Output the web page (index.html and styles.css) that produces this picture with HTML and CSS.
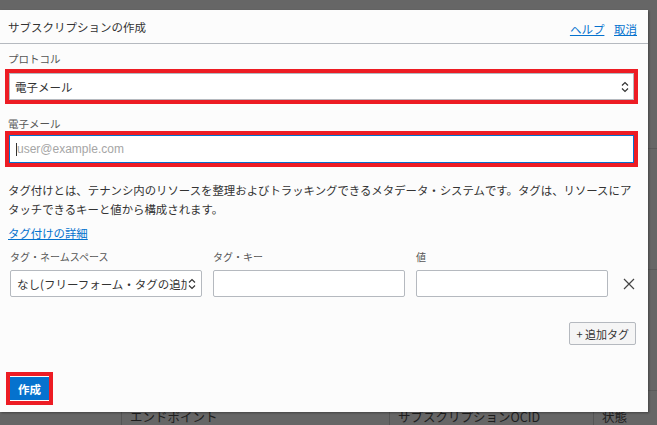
FILE: index.html
```html
<!DOCTYPE html>
<html lang="ja">

<head>
    <meta charset="UTF-8">
    <meta name="viewport" content="width=device-width, initial-scale=1.0">
    <title>サブスクリプションの作成</title>
    <link rel="stylesheet" href="styles.css">
</head>

<body>

    <!-- Page behind the dialog -->
    <div class="backdrop">
        <div class="bg-rows">
            <div class="bg-row"></div>
            <div class="bg-row"></div>
            <div class="bg-row"></div>
        </div>
        <div class="bg-head">
            <div class="bg-cell c0"></div>
            <div class="bg-cell c1">エンドポイント</div>
            <div class="bg-cell c2">サブスクリプションOCID</div>
            <div class="bg-cell c3">状態</div>
        </div>
    </div>

    <!-- Create Subscription dialog -->
    <div class="dialog">
        <div class="dialog-header">
            <h3>サブスクリプションの作成</h3>
            <div class="header-links">
                <a href="#">ヘルプ</a>
                <a href="#">取消</a>
            </div>
        </div>

        <div class="dialog-body">
            <div class="field">
                <label class="label">プロトコル</label>
                <div class="mark">
                    <div class="select big">
                        <span>電子メール</span>
                        <svg class="updown" width="8" height="12" viewBox="0 0 8 12">
                            <path d="M1 4.5 L4 1.5 L7 4.5 M1 7.5 L4 10.5 L7 7.5" fill="none" stroke="#333" stroke-width="1.2"/>
                        </svg>
                    </div>
                </div>
            </div>

            <div class="field second">
                <label class="label">電子メール</label>
                <div class="mark">
                    <div class="input focused">
                        <span class="caret"></span><span class="placeholder">user@example.com</span>
                    </div>
                </div>
            </div>

            <p class="tag-info">タグ付けとは、テナンシ内のリソースを整理およびトラッキングできるメタデータ・システムです。タグは、リソースにアタッチできるキーと値から構成されます。</p>
            <a href="#" class="more-link">タグ付けの詳細</a>

            <div class="tag-grid">
                <div class="label small">タグ・ネームスペース</div>
                <div class="label small">タグ・キー</div>
                <div class="label small">値</div>
                <div></div>

                <div class="select tag">
                    <span class="clip">なし(フリーフォーム・タグの追加)</span>
                    <svg class="updown" width="8" height="12" viewBox="0 0 8 12">
                        <path d="M1 4.5 L4 1.5 L7 4.5 M1 7.5 L4 10.5 L7 7.5" fill="none" stroke="#333" stroke-width="1.2"/>
                    </svg>
                </div>
                <div class="input tag"></div>
                <div class="input tag"></div>
                <svg class="remove" width="12" height="12" viewBox="0 0 12 12">
                    <path d="M1 1 L11 11 M11 1 L1 11" stroke="#444" stroke-width="1.2"/>
                </svg>
            </div>

            <div class="add-row">
                <button class="btn-secondary">+ 追加タグ</button>
            </div>
        </div>

        <div class="dialog-footer">
            <div class="mark thin">
                <button class="btn-primary">作成</button>
            </div>
        </div>
    </div>

</body>

</html>
```

FILE: styles.css
```css
html, body {
    margin: 0;
    padding: 0;
}

body {
    width: 657px;
    height: 425px;
    overflow: hidden;
    background: #666666;
    font-family: "Noto Sans CJK JP", "Noto Sans", sans-serif;
    position: relative;
}

/* Page behind the dialog */
.backdrop {
    height: 425px;
}

.bg-rows {
    height: 410px;
}

.bg-row {
    height: 120px;
    border-bottom: 1px solid #5a5a5a;
}

.bg-row:first-child {
    height: 148px;
}

.bg-head {
    display: flex;
    height: 15px;
}

.bg-cell {
    padding: 0 8px;
    font-size: 12.5px;
    line-height: 14px;
    color: #1e1e1e;
    border-left: 1px solid #555;
}

.bg-cell.c0 {
    width: 105px;
    border-left: none;
}

.bg-cell.c1 {
    width: 251px;
}

.bg-cell.c2 {
    width: 187px;
}

.bg-cell.c3 {
    flex: 1;
}

/* Dialog */
.dialog {
    position: absolute;
    top: 10px;
    left: 0;
    width: 648px;
    height: 402px;
    background: #fcfcfc;
    box-shadow: 1px 1px 2px rgba(0, 0, 0, 0.35);
    display: flex;
    flex-direction: column;
}

.dialog-header {
    height: 33px;
    border-bottom: 1px solid #b5b9bf;
    display: flex;
    justify-content: space-between;
    align-items: center;
    padding: 0 11px 0 8px;
}

.dialog-header h3 {
    margin: 0;
    font-size: 11.5px;
    font-weight: normal;
    color: #333;
}

.header-links a {
    font-size: 11.5px;
    color: #0572ce;
    margin-left: 6px;
}

.dialog-body {
    flex: 1;
    padding: 0 8px;
}

.field {
    margin-top: 8px;
}

.field.second {
    margin-top: 13px;
}

.field.second .label {
    margin-bottom: 0;
}

.label {
    display: block;
    font-size: 10.5px;
    line-height: 14px;
    color: #555;
    margin-bottom: 3px;
}

.label.small {
    font-size: 10px;
    margin-bottom: 6px;
}

/* Red highlight round the fields */
.mark {
    border: 4px solid #ed1c24;
    margin-left: -3px;
    width: 625px;
}

.mark.thin {
    width: auto;
    display: inline-block;
    margin-left: 0;
    border-width: 4px;
    padding: 1px 0;
}

.select, .input {
    box-sizing: border-box;
    background: #fff;
    border: 1px solid #b5b9bf;
    border-radius: 2px;
    display: flex;
    align-items: center;
    font-size: 11.5px;
    color: #333;
}

.select.big {
    height: 27px;
    padding: 0 4px 0 5px;
    justify-content: space-between;
    border-radius: 0;
}

.input.focused {
    height: 28px;
    border: 1px solid #0572ce;
    border-radius: 0;
    padding-left: 6px;
}

.caret {
    width: 1px;
    height: 13px;
    background: #333;
}

.placeholder {
    color: #a6a6a6;
    font-family: "Liberation Sans", Arial, sans-serif;
    font-size: 12px;
}

.tag-info {
    margin: 14px 0 0;
    width: 632px;
    font-size: 11.4px;
    line-height: 19px;
    color: #333;
}

.more-link {
    display: inline-block;
    margin-top: 4px;
    font-size: 11.4px;
    line-height: 16px;
    color: #0572ce;
}

.tag-grid {
    display: grid;
    grid-template-columns: 192px 192px 192px 1fr;
    column-gap: 11px;
    align-items: center;
    margin-top: 7px;
    padding-left: 2px;
}

.select.tag, .input.tag {
    height: 27px;
}

.select.tag {
    padding: 0 5px 0 6px;
    justify-content: space-between;
}

.clip {
    white-space: nowrap;
    overflow: hidden;
    width: 170px;
}

.remove {
    margin-left: 4px;
}

.add-row {
    display: flex;
    justify-content: flex-end;
    margin-top: 25px;
    padding-right: 4px;
}

.btn-secondary {
    font-family: inherit;
    font-size: 11px;
    color: #333;
    background: #f5f5f5;
    border: 1px solid #b5b9bf;
    border-radius: 2px;
    height: 23px;
    padding: 0 6px;
}

.dialog-footer {
    padding: 0 0 7px 6px;
}

.btn-primary {
    display: block;
    font-family: inherit;
    font-size: 11.5px;
    font-weight: bold;
    color: #fff;
    background: #0572ce;
    border: none;
    height: 23px;
    padding: 0 8px;
    margin: 0;
}
```
